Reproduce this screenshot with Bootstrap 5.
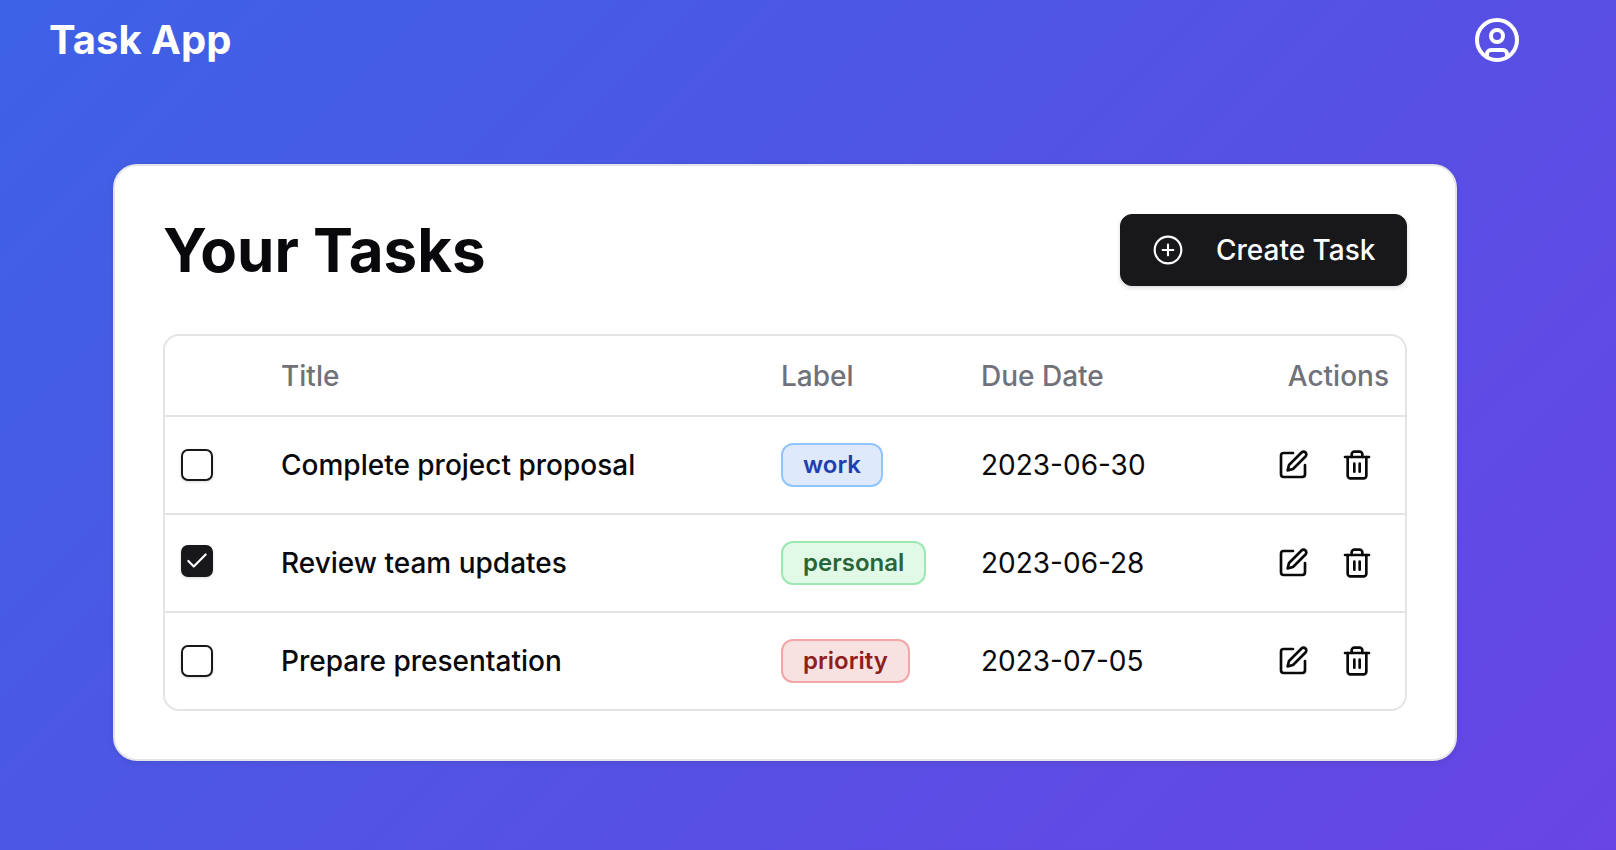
<!DOCTYPE html>
<html lang="en">
<head>
    <meta charset="UTF-8">
    <title>Task App</title>
    <meta name="viewport" content="width=device-width, initial-scale=1">
    <link href="https://cdn.jsdelivr.net/npm/bootstrap@5.3.0/dist/css/bootstrap.min.css" rel="stylesheet">
    <style>
        html, body { height: 100%; }
        body {
            font-family: Inter, "Liberation Sans", sans-serif;
            color: #09090b;
            background: linear-gradient(135deg, #3d62e5 0%, #6844e4 100%);
            overflow: hidden;
        }
        .top-bar { height: 80px; padding: 0 95px 0 49px; }
        .app-name { font-size: 40px; font-weight: 700; line-height: 1; color: #fff; }
        .user-btn { color: #fff; line-height: 0; }
        .main-wrap { padding: 84px 0 0 113px; }
        .task-panel {
            width: 1344px;
            padding: 48px;
            background: #fff;
            border: 2px solid #e4e4e7;
            border-radius: 24px;
            box-shadow: 0 2px 6px rgba(0, 0, 0, .08);
        }
        .panel-head { height: 72px; margin-bottom: 48px; }
        .panel-title { font-size: 60px; font-weight: 700; line-height: 72px; margin: 0; }
        .btn-create {
            --bs-btn-bg: #18181b;
            --bs-btn-border-color: #18181b;
            --bs-btn-hover-bg: #27272a;
            --bs-btn-hover-border-color: #27272a;
            height: 72px;
            width: 287px;
            padding: 0 0 0 31px;
            gap: 32px;
            font-size: 28px;
            font-weight: 500;
            border-radius: 12px;
            box-shadow: 0 2px 4px rgba(0, 0, 0, .15);
        }
        .table-box { border: 2px solid #e4e4e7; border-radius: 16px; overflow: hidden; }
        .task-table {
            --bs-table-border-color: #e4e4e7;
            table-layout: fixed;
            font-size: 28px;
            font-weight: 500;
        }
        .task-table th, .task-table td { padding: 0 16px; border-bottom-width: 2px; line-height: 40px; color: #09090b; vertical-align: middle; }
        .task-table tbody tr:last-child td { border-bottom: 0; }
        .task-table thead tr { height: 80px; }
        .task-table tbody tr { height: 98px; }
        .task-table tbody tr:last-child { height: 97px; }
        .task-table th { font-weight: 500; color: #71717a; }
        .col-check { width: 100px; }
        .col-title { width: 500px; }
        .col-label { width: 200px; }
        .col-due { width: 240px; }
        .task-table td.col-due { font-weight: 400; }
        .task-check {
            display: block;
            width: 32px;
            height: 32px;
            margin: 0;
            border: 2px solid #18181b;
            border-radius: 8px;
            box-shadow: 0 1px 3px rgba(0, 0, 0, .15);
        }
        .task-check:checked {
            margin-top: -4px;
            background-color: #18181b;
            border-color: #18181b;
            background-size: 26px;
            background-image: url("data:image/svg+xml,%3csvg xmlns='http://www.w3.org/2000/svg' viewBox='0 0 24 24' fill='none' stroke='%23fff' stroke-width='2' stroke-linecap='round' stroke-linejoin='round'%3e%3cpath d='M20 6 9 17l-5-5'/%3e%3c/svg%3e");
        }
        .tag {
            display: inline-block;
            padding: 4px 20px;
            border: 2px solid;
            border-radius: 12px;
            font-size: 24px;
            font-weight: 600;
            line-height: 32px;
            vertical-align: middle;
        }
        .tag-work { background: #dee9fc; border-color: #93c5fd; color: #1e40af; }
        .tag-personal { background: #e1fae8; border-color: #9be9b1; color: #2a6439; }
        .tag-priority { background: #f8e1e1; border-color: #f3a6a6; color: #8e1f1f; }
        .row-actions { gap: 32px; padding-right: 16px; }
        .icon-btn { color: #09090b; line-height: 0; }
    </style>
</head>
<body>
<header class="top-bar d-flex align-items-center justify-content-between">
    <span class="app-name">Task App</span>
    <a href="#" class="user-btn">
        <svg width="48" height="48" viewBox="0 0 24 24" fill="none" stroke="currentColor" stroke-width="2" stroke-linecap="round" stroke-linejoin="round">
            <circle cx="12" cy="12" r="10"/>
            <circle cx="12" cy="10" r="3"/>
            <path d="M7 20.662V19a2 2 0 0 1 2-2h6a2 2 0 0 1 2 2v1.662"/>
        </svg>
    </a>
</header>

<main class="main-wrap">
    <div class="task-panel">
        <div class="panel-head d-flex align-items-center justify-content-between">
            <h1 class="panel-title">Your Tasks</h1>
            <button type="button" class="btn btn-dark btn-create d-flex align-items-center">
                <svg width="32" height="32" viewBox="0 0 24 24" fill="none" stroke="currentColor" stroke-width="1.6" stroke-linecap="round" stroke-linejoin="round">
                    <circle cx="12" cy="12" r="10"/>
                    <path d="M8 12h8"/>
                    <path d="M12 8v8"/>
                </svg>
                Create Task
            </button>
        </div>

        <div class="table-box">
            <table class="table task-table mb-0">
                <thead>
                <tr>
                    <th class="col-check"></th>
                    <th class="col-title">Title</th>
                    <th class="col-label">Label</th>
                    <th class="col-due">Due Date</th>
                    <th class="text-end">Actions</th>
                </tr>
                </thead>
                <tbody id="task-rows"></tbody>
            </table>
        </div>
    </div>
</main>

<script>
    const tasks = [
        { title: "Complete project proposal", label: "work", due: "2023-06-30", done: false },
        { title: "Review team updates", label: "personal", due: "2023-06-28", done: true },
        { title: "Prepare presentation", label: "priority", due: "2023-07-05", done: false }
    ];

    const editIcon = `<svg width="32" height="32" viewBox="0 0 24 24" fill="none" stroke="currentColor" stroke-width="2" stroke-linecap="round" stroke-linejoin="round"><path d="M12 3H5a2 2 0 0 0-2 2v14a2 2 0 0 0 2 2h14a2 2 0 0 0 2-2v-7"/><path d="M18.375 2.625a2.121 2.121 0 1 1 3 3L12 15l-4 1 1-4Z"/></svg>`;
    const trashIcon = `<svg width="32" height="32" viewBox="0 0 24 24" fill="none" stroke="currentColor" stroke-width="2" stroke-linecap="round" stroke-linejoin="round"><path d="M3 6h18"/><path d="M19 6v14c0 1-1 2-2 2H7c-1 0-2-1-2-2V6"/><path d="M8 6V4c0-1 1-2 2-2h4c1 0 2 1 2 2v2"/><path d="M10 11v6"/><path d="M14 11v6"/></svg>`;

    const tbody = document.getElementById("task-rows");
    tasks.forEach(t => {
        const row = document.createElement("tr");
        row.innerHTML = `
            <td><input class="form-check-input task-check" type="checkbox" ${t.done ? "checked" : ""}></td>
            <td>${t.title}</td>
            <td><span class="tag tag-${t.label}">${t.label}</span></td>
            <td class="col-due">${t.due}</td>
            <td>
                <div class="row-actions d-flex justify-content-end">
                    <a href="#" class="icon-btn">${editIcon}</a>
                    <a href="#" class="icon-btn">${trashIcon}</a>
                </div>
            </td>
        `;
        tbody.appendChild(row);
    });
</script>
<script src="https://cdn.jsdelivr.net/npm/bootstrap@5.3.0/dist/js/bootstrap.bundle.min.js"></script>
</body>
</html>
